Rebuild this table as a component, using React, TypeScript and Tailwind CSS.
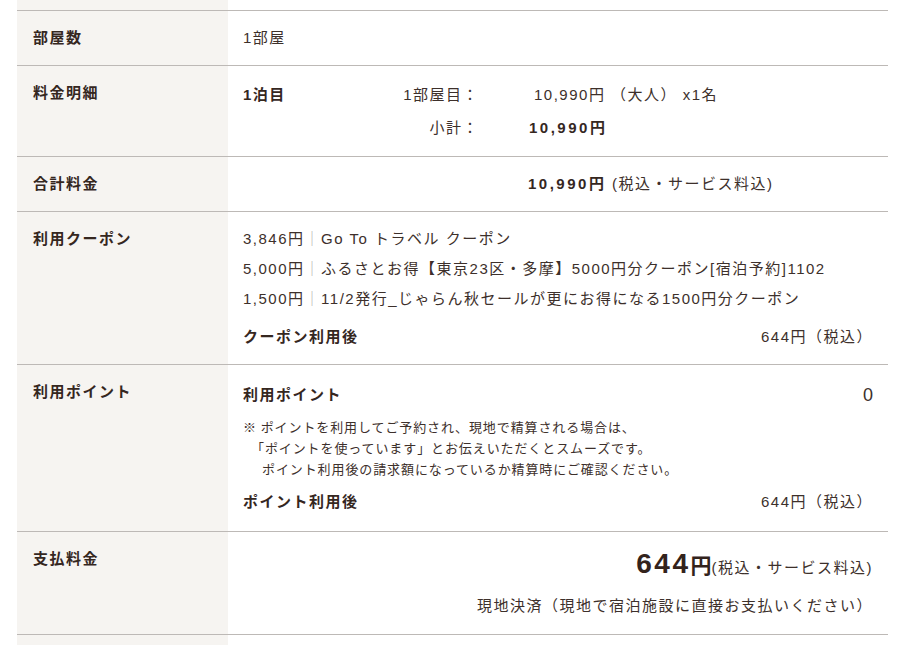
import React from 'react'

const coupons = [
  { amount: '3,846円', name: 'Go To トラベル クーポン' },
  { amount: '5,000円', name: 'ふるさとお得【東京23区・多摩】5000円分クーポン[宿泊予約]1102' },
  { amount: '1,500円', name: '11/2発行_じゃらん秋セールが更にお得になる1500円分クーポン' },
]

const Row = ({ label, children, rightClass = 'pt-4 pb-4' }: { label?: string; children?: React.ReactNode; rightClass?: string }) => (
  <div className="flex border-t border-[#bdb9b6]">
    <div className="w-[211px] shrink-0 bg-[#f6f4f1] pl-4 pt-4 pb-4 font-bold text-[#35271f]">{label}</div>
    <div className={`flex-1 pl-[15px] pr-[15px] ${rightClass}`}>{children}</div>
  </div>
)

const App = () => {
  return (
    <div className="min-h-[645px] bg-white">
      <div className="ml-[17px] mr-[12px] text-[15px] leading-[22px] tracking-[1.5px] text-[#3d302b] font-['Liberation_Sans','Noto_Sans_CJK_JP',sans-serif]">
        {/* tail of previous row */}
        <div className="flex h-[10px]">
          <div className="w-[211px] bg-[#f6f4f1]" />
          <div className="flex-1" />
        </div>

        <Row label="部屋数">1部屋</Row>

        <Row label="料金明細" rightClass="pt-[18px] pb-[17px]">
          <div className="flex">
            <div className="w-[150px] font-bold text-[#35271f]">1泊目</div>
            <div className="grid grid-cols-[86px_1fr] gap-x-[50px] gap-y-[11px]">
              <div className="text-right">1部屋目：</div>
              <div className="pl-[5px]">10,990円 （大人） x1名</div>
              <div className="text-right">小計：</div>
              <div className="font-bold tracking-[2.5px] text-[#35271f]">10,990円</div>
            </div>
          </div>
        </Row>

        <Row label="合計料金">
          <div className="pl-[285px]">
            <span className="font-bold tracking-[2.5px] text-[#35271f]">10,990円</span> (税込・サービス料込)
          </div>
        </Row>

        <Row label="利用クーポン">
          <div className="flex flex-col gap-[8px]">
            {coupons.map((c) => (
              <div key={c.amount} className="whitespace-nowrap">
                {c.amount}
                <span className="text-[#b8b4b1]">｜</span>
                {c.name}
              </div>
            ))}
          </div>
          <div className="mt-[16px] flex justify-between">
            <span className="font-bold text-[#35271f]">クーポン利用後</span>
            <span>644円（税込）</span>
          </div>
        </Row>

        <Row label="利用ポイント" rightClass="pt-4 pb-[18px]">
          <div className="flex items-center justify-between">
            <span className="font-bold text-[#35271f]">利用ポイント</span>
            <span className="text-[18px] leading-[28px] tracking-normal">0</span>
          </div>
          <div className="mt-[7px] text-[13px] leading-[21px] tracking-[0.9px] font-['Noto_Sans_CJK_JP',sans-serif]">
            <div>※ ポイントを利用してご予約され、現地で精算される場合は、</div>
            <div className="pl-[8px]">「ポイントを使っています」とお伝えいただくとスムーズです。</div>
            <div className="pl-[19px]">ポイント利用後の請求額になっているか精算時にご確認ください。</div>
          </div>
          <div className="mt-[12px] flex justify-between">
            <span className="font-bold text-[#35271f]">ポイント利用後</span>
            <span>644円（税込）</span>
          </div>
        </Row>

        <Row label="支払料金" rightClass="pt-[14px] pb-[17px]">
          <div className="text-right leading-[36px]">
            <span className="font-bold text-[#33231c] text-[28px] tracking-[2.5px]">644</span>
            <span className="font-bold text-[#33231c] text-[21px] tracking-normal">円</span>
            <span>(税込・サービス料込)</span>
          </div>
          <div className="mt-[9px] text-right">現地決済（現地で宿泊施設に直接お支払いください）</div>
        </Row>

        <Row />
      </div>
    </div>
  )
}

export default App
